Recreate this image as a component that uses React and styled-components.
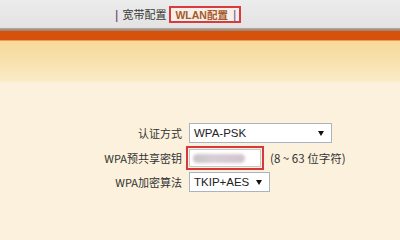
import React from "react";
import styled, { createGlobalStyle } from "styled-components";

const GlobalStyle = createGlobalStyle`
  html, body {
    margin: 0;
    padding: 0;
    background: #fbf1dc;
    font-family: "Liberation Sans", "Noto Sans CJK SC", sans-serif;
  }
  #root {
    width: 400px;
    height: 240px;
    overflow: hidden;
  }
`;

const TopBar = styled.div`
  height: 28px;
  background: linear-gradient(#ececec, #e3e3e3);
  display: flex;
  align-items: center;
  padding-left: 115px;
  font-size: 11px;
  color: #333;
`;

const Rule = styled.div`
  height: 3px;
  background: linear-gradient(#b8aaa2, #9b7d6b);
`;

const OrangeBar = styled.div`
  height: 9px;
  background: #d6520c;
  border-bottom: 1px solid #ef9a5c;
`;

const Glow = styled.div`
  height: 41px;
  background: linear-gradient(#f7d99a, #f8e3b2 60%, #faecca);
`;

const Pipe = styled.span`
  color: ${(p) => (p.$dark ? "#5a3c6e" : "#7a5a8a")};
  margin-right: ${(p) => (p.$dark ? 4 : 0)}px;
  margin-left: ${(p) => (p.$dark ? 0 : 5)}px;
  font-size: 13px;
  font-weight: normal;
`;

const NavLink = styled.span`
  color: #3a3a3a;
  margin-right: 3px;
  font-family: "Noto Sans CJK SC", sans-serif;
`;

const ActiveTab = styled.span`
  display: flex;
  align-items: center;
  height: 13px;
  padding: 0 3px 0 4px;
  border: 2px solid #d93a3e;
  background: #f7efe9;
  color: #a65a2a;
  font-weight: bold;
  font-size: 10.5px;
`;

const Form = styled.div`
  display: grid;
  grid-template-columns: 182px auto;
  column-gap: 7px;
  align-items: center;
  padding-top: 39px;
  font-size: 12px;
  color: #333;
`;

const Label = styled.div`
  text-align: right;
  font-family: "Noto Sans CJK SC", "Liberation Sans", sans-serif;
  font-size: 11px;
  height: ${(p) => p.$h}px;
  line-height: ${(p) => p.$h}px;
`;

const Field = styled.div`
  display: flex;
  align-items: center;
  height: ${(p) => p.$h}px;
`;

const Select = styled.div`
  box-sizing: border-box;
  width: ${(p) => p.$w}px;
  height: 20px;
  border: 1px solid #a9b4c0;
  background: #fff;
  display: flex;
  align-items: center;
  justify-content: space-between;
  padding: 0 7px 0 4px;
  font-size: 11.5px;
  color: #222;
  white-space: nowrap;
`;

const Arrow = styled.svg`
  flex-shrink: 0;
  width: 6px;
  height: 5px;
`;

const KeyMark = styled.div`
  box-sizing: border-box;
  width: 78px;
  height: 24px;
  border: 2px solid #d6383c;
  padding: 1px;
  display: flex;
  margin-left: -3px;
`;

const KeyInput = styled.div`
  flex: 1;
  background: #fff;
  border: 1px solid #c8c8c8;
  display: flex;
  align-items: center;
  padding-left: 3px;
`;

const Blur = styled.div`
  width: 52px;
  height: 9px;
  border-radius: 5px;
  background: linear-gradient(90deg, #c9c3c9, #d8cdd6 40%, #d3c2cf);
  filter: blur(1.5px);
`;

const Hint = styled.span`
  margin-left: 6px;
  font-family: "Noto Sans CJK SC", "Liberation Sans", sans-serif;
  font-size: 11.5px;
  color: #333;
`;

const DownArrow = () => (
  <Arrow viewBox="0 0 6 5">
    <path d="M0 0H6L3 5Z" fill="#111" />
  </Arrow>
);

export default function App() {
  return (
    <>
      <GlobalStyle />
      <TopBar>
        <Pipe $dark>|</Pipe>
        <NavLink>宽带配置</NavLink>
        <ActiveTab>
          WLAN配置
          <Pipe>|</Pipe>
        </ActiveTab>
      </TopBar>
      <Rule />
      <OrangeBar />
      <Glow />
      <Form>
        <Label $h={24}>认证方式</Label>
        <Field $h={24}>
          <Select $w={143}>
            <span>WPA-PSK</span>
            <DownArrow />
          </Select>
        </Field>
        <Label $h={26}>WPA预共享密钥</Label>
        <Field $h={26}>
          <KeyMark>
            <KeyInput>
              <Blur />
            </KeyInput>
          </KeyMark>
          <Hint>(8 ~ 63 位字符)</Hint>
        </Field>
        <Label $h={22}>WPA加密算法</Label>
        <Field $h={22}>
          <Select $w={81}>
            <span>TKIP+AES</span>
            <DownArrow />
          </Select>
        </Field>
      </Form>
    </>
  );
}
